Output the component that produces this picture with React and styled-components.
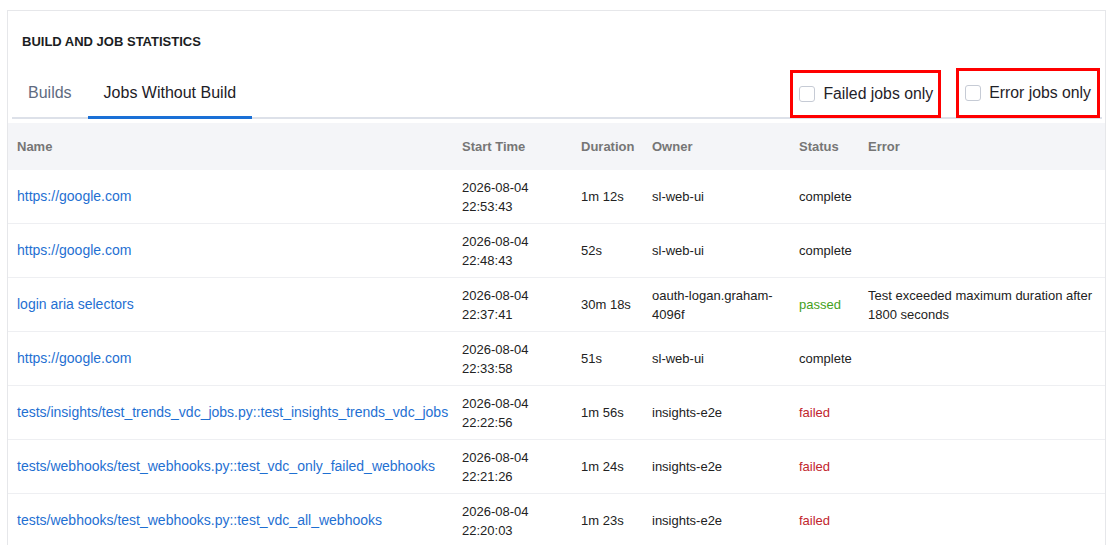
import styled, { createGlobalStyle } from "styled-components";

const GlobalStyle = createGlobalStyle`
    body {
        margin: 0;
        background: #fff;
        font-family: "Liberation Sans", Arial, sans-serif;
        color: #222;
    }
`;

const Card = styled.div`
    margin: 10px 0 0 7px;
    width: 1097px;
    border: 1px solid #e6e7ea;
    border-bottom: none;
    background: #fff;
`;
const Title = styled.h2`
    margin: 0;
    padding: 23px 0 0 14px;
    font-size: 13px;
    line-height: 16px;
    font-weight: 700;
    color: #1b1d22;
`;
const TabRow = styled.div`
    display: flex;
    align-items: flex-end;
    justify-content: space-between;
    margin: 18px 3px 0 4px;
    border-bottom: 2px solid #dde1e9;
    height: 49px;
`;
const Tabs = styled.div`
    display: flex;
    align-items: flex-end;
`;
const Tab = styled.div`
    padding: 13px 16px 13px;
    margin-bottom: -2px;
    font-size: 16px;
    line-height: 20px;
    color: ${p => (p.$active ? "#1d2026" : "#5f6b80")};
    border-bottom: 3px solid ${p => (p.$active ? "#1a70d6" : "transparent")};
    cursor: pointer;
`;
const Filters = styled.div`
    display: flex;
    align-items: flex-end;
    gap: 15px;
    height: 100%;
    margin-right: 2px;
`;
const FilterLabel = styled.label`
    display: flex;
    align-items: center;
    gap: 8px;
    height: ${p => p.$tall ? "44px" : "42px"};
    margin-bottom: -1px;
    padding: 0 ${p => p.$padRight}px 0 6px;
    border: 3px solid #ff0000;
    font-size: 15.8px;
    color: #1f2228;
    cursor: pointer;
`;
const Box = styled.span`
    width: 14px;
    height: 14px;
    border: 1px solid #c6cbd5;
    border-radius: 3px;
    background: #fff;
`;
const Table = styled.table`
    width: 100%;
    margin-top: 4px;
    border-collapse: collapse;
    table-layout: fixed;
`;
const Th = styled.th`
    height: 47px;
    padding: 0 9px;
    background: #f4f5f8;
    text-align: left;
    font-size: 13px;
    font-weight: 700;
    color: #767676;
`;
const Td = styled.td`
    height: 53px;
    padding: 0 9px;
    border-bottom: 1px solid #eeeff2;
    font-size: 13px;
    line-height: 19px;
    vertical-align: middle;
    color: ${p => p.$color || "#222"};
`;
const Link = styled.a`
    color: #1f70d2;
    font-size: 14px;
    text-decoration: none;
    white-space: nowrap;
`;

const statusColors = { passed: "#45a11b", failed: "#c1262d" };

const jobs = [
    { name: "https://google.com", date: "2026-08-04", time: "22:53:43", duration: "1m 12s", owner: "sl-web-ui", status: "complete" },
    { name: "https://google.com", date: "2026-08-04", time: "22:48:43", duration: "52s", owner: "sl-web-ui", status: "complete" },
    { name: "login aria selectors", date: "2026-08-04", time: "22:37:41", duration: "30m 18s", owner: "oauth-logan.graham-4096f", status: "passed", error: "Test exceeded maximum duration after 1800 seconds" },
    { name: "https://google.com", date: "2026-08-04", time: "22:33:58", duration: "51s", owner: "sl-web-ui", status: "complete" },
    { name: "tests/insights/test_trends_vdc_jobs.py::test_insights_trends_vdc_jobs", date: "2026-08-04", time: "22:22:56", duration: "1m 56s", owner: "insights-e2e", status: "failed" },
    { name: "tests/webhooks/test_webhooks.py::test_vdc_only_failed_webhooks", date: "2026-08-04", time: "22:21:26", duration: "1m 24s", owner: "insights-e2e", status: "failed" },
    { name: "tests/webhooks/test_webhooks.py::test_vdc_all_webhooks", date: "2026-08-04", time: "22:20:03", duration: "1m 23s", owner: "insights-e2e", status: "failed" },
];

const App = () => {
    return (
        <>
            <GlobalStyle />
            <Card>
                <Title>BUILD AND JOB STATISTICS</Title>
                <TabRow>
                    <Tabs>
                        <Tab>Builds</Tab>
                        <Tab $active>Jobs Without Build</Tab>
                    </Tabs>
                    <Filters>
                        <FilterLabel $padRight={5}>
                            <Box />
                            Failed jobs only
                        </FilterLabel>
                        <FilterLabel $tall $padRight={6}>
                            <Box />
                            Error jobs only
                        </FilterLabel>
                    </Filters>
                </TabRow>
                <Table>
                    <colgroup>
                        <col style={{ width: 445 }} />
                        <col style={{ width: 119 }} />
                        <col style={{ width: 71 }} />
                        <col style={{ width: 147 }} />
                        <col style={{ width: 69 }} />
                        <col />
                    </colgroup>
                    <thead>
                        <tr>
                            <Th>Name</Th>
                            <Th>Start Time</Th>
                            <Th>Duration</Th>
                            <Th>Owner</Th>
                            <Th>Status</Th>
                            <Th>Error</Th>
                        </tr>
                    </thead>
                    <tbody>
                        {jobs.map((job, i) => (
                            <tr key={i}>
                                <Td><Link href="#">{job.name}</Link></Td>
                                <Td>{job.date}<br />{job.time}</Td>
                                <Td>{job.duration}</Td>
                                <Td>{job.owner}</Td>
                                <Td $color={statusColors[job.status]}>{job.status}</Td>
                                <Td>{job.error}</Td>
                            </tr>
                        ))}
                    </tbody>
                </Table>
            </Card>
        </>
    )
}

export default App;
